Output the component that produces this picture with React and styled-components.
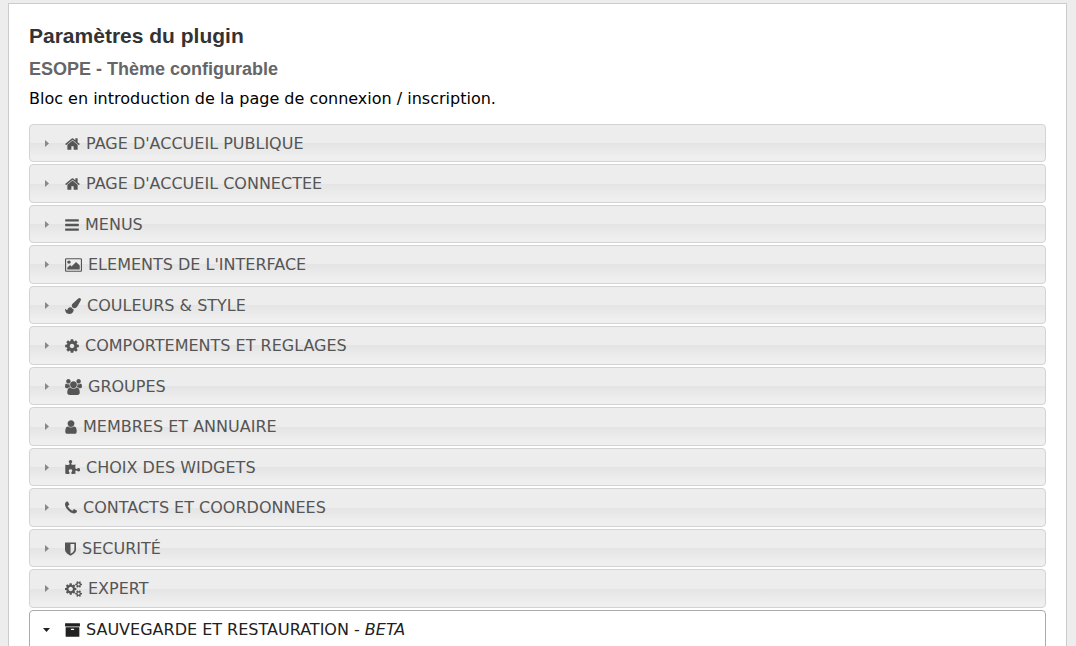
import React, { useState } from "react";
import styled, { createGlobalStyle } from "styled-components";

const GlobalStyle = createGlobalStyle`
  * { box-sizing: border-box; }
  body {
    margin: 0;
    background: #ededed;
    color: #000;
    font: 16px/22px "DejaVu Sans", Verdana, sans-serif;
  }
`;

const Page = styled.main`
  margin: 3px 9px 0 8px;
  padding: 20px 20px 40px;
  background: #fff;
  border: 1px solid #ccc;
`;

const Title = styled.h2`
  margin: 0 0 10px;
  font: bold 21px/24px "Liberation Sans", Arial, sans-serif;
  color: #333;
`;

const Subtitle = styled.h3`
  margin: 0 0 8px;
  font: bold 18px/22px "Liberation Sans", Arial, sans-serif;
  color: #666;
`;

const Intro = styled.p`
  margin: 0 0 14px;
`;

const Accordion = styled.div`
  display: flex;
  flex-direction: column;
  gap: 2px;
`;

const Header = styled.button`
  display: flex;
  align-items: center;
  width: 100%;
  padding: 8px 13px 6px;
  font: inherit;
  text-align: left;
  cursor: pointer;
  border: 1px solid ${(p) => (p.$open ? "#aaa" : "#d3d3d3")};
  border-radius: ${(p) => (p.$open ? "4px 4px 0 0" : "4px")};
  color: ${(p) => (p.$open ? "#212121" : "#555")};
  background: ${(p) =>
    p.$open ? "#fff" : "linear-gradient(#ededed 50%, #e4e4e4 50%, #efefef 90%)"};
`;

const Section = styled.h3`
  margin: 0;
  font: inherit;

  &:nth-of-type(even) ${Header} { padding-bottom: 7px; }
`;

const Arrow = styled.svg`
  flex: none;
  width: 8px;
  height: 8px;
  margin-right: 14px;
  fill: ${(p) => (p.$open ? "#222" : "#888")};
`;

const Icon = styled.svg`
  flex: none;
  width: ${(p) => p.$width}px;
  height: 16px;
  margin-right: 6px;
  fill: currentColor;
`;

const Panel = styled.div`
  margin-top: -2px;
  min-height: 120px;
  border: 1px solid #aaa;
  border-top: 0;
  border-radius: 0 0 4px 4px;
`;

/* Glyphs on a 1792-unit em: x origin, advance, drawn width, outline */
const icons = {
  home: [64, 1664, 15, "M1472 992v480q0 26-19 45t-45 19h-384v-384h-256v384h-384q-26 0-45-19t-19-45v-480q0-1 .5-3t.5-3l575-474 575 474q1 2 1 6zm223-69l-62 74q-8 9-21 11h-3q-13 0-21-7l-692-577-692 577q-12 8-24 7-13-2-21-11l-62-74q-8-10-7-23.5t11-21.5l719-599q32-26 76-26t76 26l244 204v-195q0-14 9-23t23-9h192q14 0 23 9t9 23v408l219 182q10 8 11 21.5t-7 23.5z"],
  bars: [128, 1536, 14, "M1664 1344v128q0 26-19 45t-45 19h-1408q-26 0-45-19t-19-45v-128q0-26 19-45t45-19h1408q26 0 45 19t19 45zm0-512v128q0 26-19 45t-45 19h-1408q-26 0-45-19t-19-45v-128q0-26 19-45t45-19h1408q26 0 45 19t19 45zm0-512v128q0 26-19 45t-45 19h-1408q-26 0-45-19t-19-45v-128q0-26 19-45t45-19h1408q26 0 45 19t19 45z"],
  picture: [-64, 1920, 17, "M576 576q0 80-56 136t-136 56-136-56-56-136 56-136 136-56 136 56 56 136zm1024 384v448h-1408v-192l320-320 160 160 512-512zm96-704h-1600q-13 0-22.5 9.5t-9.5 22.5v1216q0 13 9.5 22.5t22.5 9.5h1600q13 0 22.5-9.5t9.5-22.5v-1216q0-13-9.5-22.5t-22.5-9.5zm160 32v1216q0 66-47 113t-113 47h-1600q-66 0-113-47t-47-113v-1216q0-66 47-113t113-47h1600q66 0 113 47t47 113z"],
  brush: [0, 1792, 16, "M1615 0q70 0 122.5 46.5t52.5 116.5q0 63-45 151-332 629-465 752-97 91-218 91-126 0-216.5-92.5t-90.5-219.5q0-128 92-212l638-579q59-54 130-54zm-909 1034q39 76 106.5 130t150.5 76l1 71q4 213-129.5 347t-348.5 134q-123 0-218-46.5t-152.5-127.5-86.5-183-29-220q7 5 41 30t62 44.5 59 36.5 46 17q41 0 55-37 25-66 57.5-112.5t69.5-76 88-47.5 103-25.5 125-10.5z"],
  cog: [128, 1536, 14, "M1152 896q0-106-75-181t-181-75-181 75-75 181 75 181 181 75 181-75 75-181zm512-109v222q0 12-8 23t-20 13l-185 28q-19 54-39 91 35 50 107 138 10 12 10 25t-9 23q-27 37-99 108t-94 71q-12 0-26-9l-138-108q-44 23-91 38-16 136-29 186-7 28-36 28h-222q-14 0-24.5-8.5t-11.5-21.5l-28-184q-49-16-90-37l-141 107q-10 9-25 9-14 0-25-11-126-114-165-168-7-10-7-23 0-12 8-23 15-21 51-66.5t54-70.5q-27-50-41-99l-183-27q-13-2-21-12.5t-8-23.5v-222q0-12 8-23t19-13l186-28q14-46 39-92-40-57-107-138-10-12-10-24 0-10 9-23 26-36 98.5-107.5t94.5-71.5q13 0 26 10l138 107q44-23 91-38 16-136 29-186 7-28 36-28h222q14 0 24.5 8.5t11.5 21.5l28 184q49 16 90 37l142-107q9-9 24-9 13 0 25 10 129 119 165 170 7 8 7 22 0 12-8 23-15 21-51 66.5t-54 70.5q26 50 41 98l183 28q13 2 21 12.5t8 23.5z"],
  users: [64, 1920, 17, "M657 896q-162 5-265 128h-134q-82 0-138-40.5t-56-118.5q0-353 124-353 6 0 43.5 21t97.5 42.5 119 21.5q67 0 133-23-5 37-5 66 0 139 81 256zm1071 637q0 120-73 189.5t-194 69.5h-874q-121 0-194-69.5t-73-189.5q0-53 3.5-103.5t14-109 26.5-108.5 43-97.5 62-81 85.5-53.5 111.5-20q10 0 43 21.5t73 48 107 48 135 21.5 135-21.5 107-48 73-48 43-21.5q61 0 111.5 20t85.5 53.5 62 81 43 97.5 26.5 108.5 14 109 3.5 103.5zm-1024-1277q0 106-75 181t-181 75-181-75-75-181 75-181 181-75 181 75 75 181zm704 384q0 159-112.5 271.5t-271.5 112.5-271.5-112.5-112.5-271.5 112.5-271.5 271.5-112.5 271.5 112.5 112.5 271.5zm576 225q0 78-56 118.5t-138 40.5h-134q-103-123-265-128 81-117 81-256 0-29-5-66 66 23 133 23 59 0 119-21.5t97.5-42.5 43.5-21q124 0 124 353zm-128-609q0 106-75 181t-181 75-181-75-75-181 75-181 181-75 181 75 75 181z"],
  user: [256, 1280, 12, "M1536 1399q0 109-62.5 187t-150.5 78h-854q-88 0-150.5-78t-62.5-187q0-85 8.5-160.5t31.5-152 58.5-131 94-89 134.5-34.5q131 128 313 128t313-128q76 0 134.5 34.5t94 89 58.5 131 31.5 152 8.5 160.5zm-256-887q0 159-112.5 271.5t-271.5 112.5-271.5-112.5-112.5-271.5 112.5-271.5 271.5-112.5 271.5 112.5 112.5 271.5z"],
  puzzle: [64, 1664, 15, "M1755 1099q0 81-44.5 135t-123.5 54q-41 0-77.5-17.5t-59-38-56.5-38-71-17.5q-110 0-110 124 0 39 16 115t15 115v5q-22 0-33 1-34 3-97.5 11.5t-115.5 13.5-98 5q-61 0-103-26.5t-42-83.5q0-37 17.5-71t38-56.5 38-59 17.5-77.5q0-79-54-123.5t-135-44.5q-84 0-143 45.5t-59 127.5q0 43 15 83t33.5 64.5 33.5 53 15 50.5q0 45-46 89-37 35-117 35-95 0-245-24-9-2-27.5-4t-27.5-4l-13-2q-1 0-3-1-2 0-2-1v-1024q2 1 17.5 3.5t34 5 21.5 3.5q150 24 245 24 80 0 117-35 46-44 46-89 0-22-15-50.5t-33.5-53-33.5-64.5-15-83q0-82 59-127.5t144-45.5q80 0 134 44.5t54 123.5q0 41-17.5 77.5t-38 59-38 56.5-17.5 71q0 57 42 83.5t103 26.5q64 0 180-15t163-17v2q-1 2-3.5 17.5t-5 34-3.5 21.5q-24 150-24 245 0 80 35 117 44 46 89 46 22 0 50.5-15t53-33.5 64.5-33.5 83-15q82 0 127.5 59t45.5 143z"],
  phone: [192, 1408, 12, "M1600 1240q0 27-10 70.5t-21 68.5q-21 50-122 106-94 51-186 51-27 0-52.5-3.5t-57.5-12.5-47.5-14.5-55.5-20.5-49-18q-98-35-175-83-128-79-264.5-215.5t-215.5-264.5q-48-77-83-175-3-9-18-49t-20.5-55.5-14.5-47.5-12.5-57.5-3.5-52.5q0-92 51-186 56-101 106-122 25-11 68.5-21t70.5-10q14 0 21 3 18 6 53 76 11 19 30 54t35 63.5 31 53.5q3 4 17.5 25t21.5 35.5 7 28.5q0 20-28.5 50t-62 55-62 53-28.5 46q0 9 5 22.5t8.5 20.5 14 24 11.5 19q76 137 174 235t235 174q2 1 19 11.5t24 14 20.5 8.5 22.5 5q18 0 46-28.5t53-62 55-62 50-28.5q14 0 28.5 7t35.5 21.5 25 17.5q25 15 53.5 31t63.5 35 54 30q70 35 76 53 3 7 3 21z"],
  shield: [256, 1280, 11, "M1344 960v-640h-448v1137q119-63 213-137 235-184 235-360zm192-768v768q0 86-33.5 170.5t-83 150-118 127.5-126.5 103-121 77.5-89.5 49.5-42.5 20q-12 6-26 6t-26-6q-16-7-42.5-20t-89.5-49.5-121-77.5-126.5-103-118-127.5-83-150-33.5-170.5v-768q0-26 19-45t45-19h1152q26 0 45 19t19 45z"],
  cogs: [-64, 1920, 17, "M832 896q0-106-75-181t-181-75-181 75-75 181 75 181 181 75 181-75 75-181zm768 512q0-52-38-90t-90-38-90 38-38 90q0 53 37.5 90.5t90.5 37.5 90.5-37.5 37.5-90.5zm0-1024q0-52-38-90t-90-38-90 38-38 90q0 53 37.5 90.5t90.5 37.5 90.5-37.5 37.5-90.5zm-384 421v185q0 10-7 19.5t-16 10.5l-155 24q-11 35-32 76 34 48 90 115 7 11 7 20 0 12-7 19-23 30-82.5 89.5t-78.5 59.5q-11 0-21-7l-115-90q-37 19-77 31-11 108-23 155-7 24-30 24h-186q-11 0-20-7.5t-10-17.5l-23-153q-34-10-75-31l-118 89q-7 7-20 7-11 0-21-8-144-133-144-160 0-9 7-19 10-14 41-53t47-61q-23-44-35-82l-152-24q-10-1-17-9.5t-7-19.5v-185q0-10 7-19.5t16-10.5l155-24q11-35 32-76-34-48-90-115-7-11-7-20 0-12 7-20 22-30 82-89t79-59q11 0 21 7l115 90q34-18 77-32 11-108 23-154 7-24 30-24h186q11 0 20 7.5t10 17.5l23 153q34 10 75 31l118-89q8-7 20-7 11 0 21 8 144 133 144 160 0 8-7 19-12 16-42 54t-45 60q23 48 34 82l152 23q10 2 17 10.5t7 19.5zm640 533v140q0 16-149 31-12 27-30 52 51 113 51 138 0 4-4 7-122 71-124 71-8 0-46-47t-52-68q-20 2-30 2t-30-2q-14 21-52 68t-46 47q-2 0-124-71-4-3-4-7 0-25 51-138-18-25-30-52-149-15-149-31v-140q0-16 149-31 13-29 30-52-51-113-51-138 0-4 4-7 4-2 35-20t59-34 30-16q8 0 46 46.5t52 67.5q20-2 30-2t30 2q51-71 92-112l6-2q4 0 124 70 4 3 4 7 0 25-51 138 17 23 30 52 149 15 149 31zm0-1024v140q0 16-149 31-12 27-30 52 51 113 51 138 0 4-4 7-122 71-124 71-8 0-46-47t-52-68q-20 2-30 2t-30-2q-14 21-52 68t-46 47q-2 0-124-71-4-3-4-7 0-25 51-138-18-25-30-52-149-15-149-31v-140q0-16 149-31 13-29 30-52-51-113-51-138 0-4 4-7 4-2 35-20t59-34 30-16q8 0 46 46.5t52 67.5q20-2 30-2t30 2q51-71 92-112l6-2q4 0 124 70 4 3 4 7 0 25-51 138 17 23 30 52 149 15 149 31z"],
  archive: [64, 1664, 15, "M1088 832q0-26-19-45t-45-19h-256q-26 0-45 19t-19 45 19 45 45 19h256q26 0 45-19t19-45zm576-192v960q0 26-19 45t-45 19h-1408q-26 0-45-19t-19-45v-960q0-26 19-45t45-19h1408q26 0 45 19t19 45zm64-448v256q0 26-19 45t-45 19h-1536q-26 0-45-19t-19-45v-256q0-26 19-45t45-19h1536q26 0 45 19t19 45z"],
};

const sections = [
  ["home", "PAGE D'ACCUEIL PUBLIQUE"],
  ["home", "PAGE D'ACCUEIL CONNECTEE"],
  ["bars", "MENUS"],
  ["picture", "ELEMENTS DE L'INTERFACE"],
  ["brush", "COULEURS & STYLE"],
  ["cog", "COMPORTEMENTS ET REGLAGES"],
  ["users", "GROUPES"],
  ["user", "MEMBRES ET ANNUAIRE"],
  ["puzzle", "CHOIX DES WIDGETS"],
  ["phone", "CONTACTS ET COORDONNEES"],
  ["shield", "SECURITÉ"],
  ["cogs", "EXPERT"],
  ["archive", <>SAUVEGARDE ET RESTAURATION - <em>BETA</em></>],
];

function Glyph({ name }) {
  const [x, advance, width, d] = icons[name];
  return (
    <Icon $width={width} viewBox={`${x} 0 ${advance} 1792`} aria-hidden="true">
      <path d={d} />
    </Icon>
  );
}

export default function App() {
  const [openIndex, setOpenIndex] = useState(12);
  return (
    <>
      <GlobalStyle />
      <Page>
        <Title>Paramètres du plugin</Title>
        <Subtitle>ESOPE - Thème configurable</Subtitle>
        <Intro>Bloc en introduction de la page de connexion / inscription.</Intro>
        <Accordion>
          {sections.map(([icon, label], i) => {
            const open = i === openIndex;
            return (
              <React.Fragment key={i}>
                <Section>
                  <Header
                    type="button"
                    $open={open}
                    aria-expanded={open}
                    onClick={() => setOpenIndex(open ? -1 : i)}
                  >
                    <Arrow $open={open} viewBox="0 0 8 8" aria-hidden="true">
                      <path d={open ? "M0 2h7L3.5 6z" : "M2 0v7l4-3.5z"} />
                    </Arrow>
                    <Glyph name={icon} />
                    <span>{label}</span>
                  </Header>
                </Section>
                {open && <Panel />}
              </React.Fragment>
            );
          })}
        </Accordion>
      </Page>
    </>
  );
}
